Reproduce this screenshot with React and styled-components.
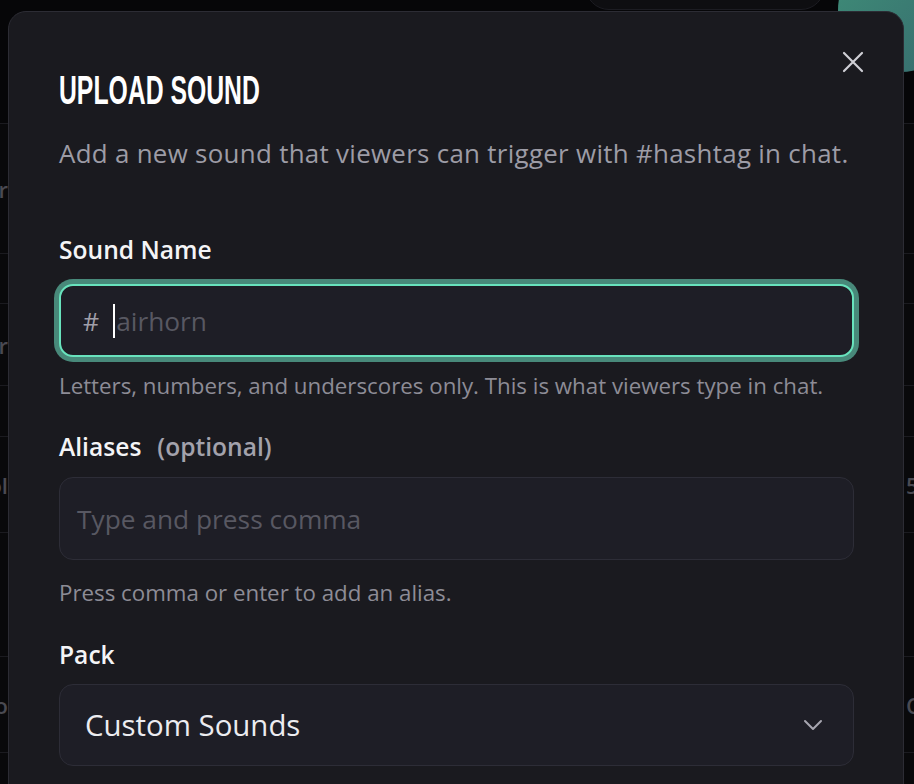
import styled, { createGlobalStyle } from "styled-components";

const Global = createGlobalStyle`
  html, body {
    margin: 0;
    padding: 0;
    background: #08080a;
    overflow: hidden;
  }
  * {
    box-sizing: border-box;
  }
`;

const Page = styled.div`
  position: relative;
  width: 914px;
  height: 784px;
  overflow: hidden;
  background: #09090b;
  font-family: "Open Sans", "Noto Sans", sans-serif;
`;

const Header = styled.div`
  height: 164px;
  display: flex;
  align-items: flex-start;
  gap: 13px;
  padding-left: 585px;
  margin-top: -40px;
  border-bottom: 1px solid #1b1b20;
  background: #060608;
`;

const Pill = styled.div`
  flex-shrink: 0;
  width: 240px;
  height: 50px;
  border-radius: 24px;
  border: 1px solid #1c1c22;
  background: #0e0e11;
`;

const Avatar = styled.div`
  flex-shrink: 0;
  margin-top: -12px;
  width: 124px;
  height: 124px;
  border-radius: 50%;
  background: linear-gradient(135deg, #3f8f78, #376a6e);
`;

const Row = styled.div`
  height: ${(p) => p.h}px;
  display: flex;
  align-items: center;
  justify-content: space-between;
  border-bottom: 1px solid #1b1b20;
  color: #4a4a52;
  font-size: 22px;
  font-weight: 600;
`;

const EdgeText = styled.span`
  width: 8px;
  overflow: hidden;
  display: flex;
  justify-content: ${(p) => (p.right ? "flex-start" : "flex-end")};
  white-space: nowrap;
`;

const Modal = styled.div`
  position: absolute;
  left: 8px;
  top: 11px;
  width: 896px;
  height: 800px;
  background: #1a1a1f;
  border: 1px solid #2c2c34;
  border-radius: 18px;
  padding: 58px 49px 0 50px;
  display: flex;
  flex-direction: column;
`;

const CloseButton = styled.button`
  position: absolute;
  top: 30px;
  right: 30px;
  width: 40px;
  height: 40px;
  padding: 0;
  border: none;
  background: transparent;
  display: flex;
  align-items: center;
  justify-content: center;
  color: #cfcfd5;
`;

const Title = styled.h2`
  margin: 0;
  font-family: "Liberation Sans Narrow", "Liberation Sans", sans-serif;
  font-weight: 700;
  font-size: 33px;
  line-height: 40px;
  color: #ffffff;
  white-space: nowrap;
  transform: scale(0.75, 1.23);
  transform-origin: left center;
`;

const Subtitle = styled.p`
  margin: 28px 0 0;
  font-size: 25.9px;
  line-height: 30px;
  letter-spacing: 0.3px;
  color: #9d9ca6;
  white-space: nowrap;
`;

const Field = styled.div`
  display: flex;
  flex-direction: column;
  margin-top: ${(p) => p.top}px;
`;

const Label = styled.label`
  font-size: 24.6px;
  line-height: 30px;
  font-weight: 600;
  color: #f4f4f6;
  display: flex;
  gap: 16px;
`;

const Optional = styled.span`
  font-weight: 600;
  color: #a3a2ac;
`;

const InputBox = styled.div`
  margin-top: ${(p) => p.top}px;
  height: ${(p) => p.h}px;
  display: flex;
  align-items: center;
  padding: 0 ${(p) => (p.focused ? 22 : 17)}px;
  gap: 14px;
  background: #1e1e26;
  border-radius: 14px;
  border: ${(p) => (p.focused ? "2px solid #68e3bd" : "1px solid #2d2d37")};
  box-shadow: ${(p) => (p.focused ? "0 0 0 5px #48897a" : "none")};
`;

const Hash = styled.span`
  font-size: 25px;
  color: #a09fa9;
`;

const Placeholder = styled.span`
  font-size: 26.3px;
  color: #585862;
  display: flex;
  align-items: center;
`;

const Caret = styled.span`
  width: 2px;
  height: 34px;
  background: #ffffff;
  margin-right: 1px;
`;

const Help = styled.p`
  margin: ${(p) => p.top}px 0 0;
  font-size: 22.3px;
  line-height: 26px;
  color: #8d8c96;
  white-space: nowrap;
`;

const SelectBox = styled.div`
  margin-top: 14px;
  height: 82px;
  display: flex;
  align-items: center;
  justify-content: space-between;
  padding: 0 30px 0 25px;
  background: #1e1e26;
  border: 1px solid #2d2d37;
  border-radius: 14px;
  font-size: 29.4px;
  color: #ececf0;
`;

const rows = [
  { h: 130, l: "r", r: "" },
  { h: 50, l: "", r: "" },
  { h: 82, l: "r", r: "" },
  { h: 51, l: "", r: "" },
  { h: 96, l: "ol", r: "56" },
  { h: 124, l: "", r: "" },
  { h: 96, l: "o", r: "C" },
  { h: 60, l: "", r: "" },
];

export default function App() {
  return (
    <Page>
      <Global />
      <Header>
        <Pill />
        <Avatar />
      </Header>
      {rows.map((row, i) => (
        <Row key={i} h={row.h}>
          <EdgeText>{row.l}</EdgeText>
          <EdgeText right>{row.r}</EdgeText>
        </Row>
      ))}

      <Modal>
        <CloseButton aria-label="Close">
          <svg width="22" height="22" viewBox="0 0 22 22" fill="none">
            <path
              d="M2 2L20 20M20 2L2 20"
              stroke="currentColor"
              strokeWidth="2.2"
              strokeLinecap="round"
            />
          </svg>
        </CloseButton>

        <Title>UPLOAD SOUND</Title>
        <Subtitle>
          Add a new sound that viewers can trigger with #hashtag in chat.
        </Subtitle>

        <Field top={67}>
          <Label>Sound Name</Label>
          <InputBox focused top={19} h={73}>
            <Hash>#</Hash>
            <Placeholder>
              <Caret />
              airhorn
            </Placeholder>
          </InputBox>
          <Help top={16}>
            Letters, numbers, and underscores only. This is what viewers type in
            chat.
          </Help>
        </Field>

        <Field top={33}>
          <Label>
            Aliases <Optional>(optional)</Optional>
          </Label>
          <InputBox top={15} h={83}>
            <Placeholder>Type and press comma</Placeholder>
          </InputBox>
          <Help top={20}>Press comma or enter to add an alias.</Help>
        </Field>

        <Field top={34}>
          <Label>Pack</Label>
          <SelectBox>
            <span>Custom Sounds</span>
            <svg width="20" height="12" viewBox="0 0 20 12" fill="none">
              <path
                d="M2 2L10 10L18 2"
                stroke="#a7a6b0"
                strokeWidth="2"
                strokeLinecap="round"
                strokeLinejoin="round"
              />
            </svg>
          </SelectBox>
        </Field>
      </Modal>
    </Page>
  );
}
